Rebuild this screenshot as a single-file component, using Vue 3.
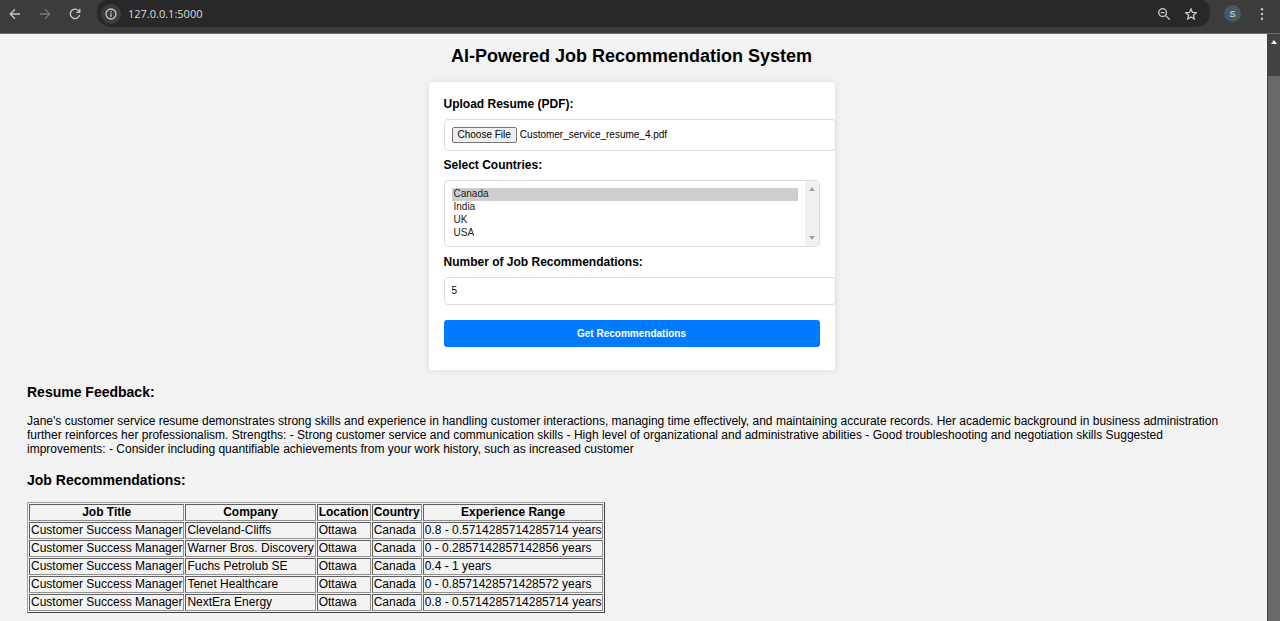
<script setup>
import { onMounted, ref } from 'vue'

const resumeInput = ref(null)
const countries = ['Canada', 'India', 'UK', 'USA']
const selected = ref(['Canada'])
const count = ref(5)

const columns = ['Job Title', 'Company', 'Location', 'Country', 'Experience Range']
const jobs = [
  ['Customer Success Manager', 'Cleveland-Cliffs', 'Ottawa', 'Canada', '0.8 - 0.5714285714285714 years'],
  ['Customer Success Manager', 'Warner Bros. Discovery', 'Ottawa', 'Canada', '0 - 0.2857142857142856 years'],
  ['Customer Success Manager', 'Fuchs Petrolub SE', 'Ottawa', 'Canada', '0.4 - 1 years'],
  ['Customer Success Manager', 'Tenet Healthcare', 'Ottawa', 'Canada', '0 - 0.8571428571428572 years'],
  ['Customer Success Manager', 'NextEra Energy', 'Ottawa', 'Canada', '0.8 - 0.5714285714285714 years'],
]

onMounted(() => {
  const transfer = new DataTransfer()
  transfer.items.add(new File([''], 'Customer_service_resume_4.pdf', { type: 'application/pdf' }))
  resumeInput.value.files = transfer.files
})
</script>

<template>
  <div class="browser">
    <header class="toolbar">
      <nav class="nav">
        <button type="button" aria-label="Back">
          <svg viewBox="0 0 12 12"><path d="M11 6H1.5M6 1.2L1.2 6L6 10.8" /></svg>
        </button>
        <button type="button" class="dim" aria-label="Forward">
          <svg viewBox="0 0 12 12"><path d="M1 6H10.5M6 1.2L10.8 6L6 10.8" /></svg>
        </button>
        <button type="button" aria-label="Reload">
          <svg viewBox="0 0 12 12"><path d="M10.6 7A4.7 4.7 0 1 1 9.6 2.8L10.8 4.2M10.8 0.8V4.3H7.2" /></svg>
        </button>
      </nav>
      <div class="omnibox">
        <button type="button" class="info" aria-label="Site information">
          <svg viewBox="0 0 12 12"><circle cx="6" cy="6" r="5" /><path d="M6 5.4V8.8M6 3.1V4.4" /></svg>
        </button>
        <input class="address" type="text" aria-label="Address" value="127.0.0.1:5000" />
        <button type="button" aria-label="Zoom">
          <svg viewBox="0 0 12 12"><circle cx="4.6" cy="4.6" r="3.9" /><path d="M7.4 7.4L11.7 11.7M2.8 4.6H6.4" /></svg>
        </button>
        <button type="button" aria-label="Bookmark">
          <svg viewBox="0 0 12 12"><path d="M6 0.9L7.5 4.4L11.3 4.7L8.4 7.2L9.3 11L6 9L2.7 11L3.6 7.2L0.7 4.7L4.5 4.4Z" /></svg>
        </button>
      </div>
      <button type="button" class="avatar" aria-label="Profile">S</button>
      <button type="button" class="menu" aria-label="Menu">
        <svg viewBox="0 0 4 12"><circle cx="2" cy="1.3" r="1.2" /><circle cx="2" cy="6" r="1.2" /><circle cx="2" cy="10.7" r="1.2" /></svg>
      </button>
    </header>

    <div class="viewport">
      <main class="page">
        <h1>AI-Powered Job Recommendation System</h1>
        <form class="card" @submit.prevent>
          <label for="resume">Upload Resume (PDF):</label>
          <input id="resume" ref="resumeInput" class="field" type="file" accept=".pdf" />

          <label for="countries">Select Countries:</label>
          <div class="list">
            <select id="countries" v-model="selected" multiple size="4">
              <option v-for="c in countries" :key="c" :value="c">{{ c }}</option>
            </select>
            <div class="list-scroll" aria-hidden="true">
              <i class="arrow up"></i>
              <i class="arrow down"></i>
            </div>
          </div>

          <label for="count">Number of Job Recommendations:</label>
          <input id="count" v-model="count" class="field number" type="number" />

          <button class="submit" type="submit">Get Recommendations</button>
        </form>

        <section class="results">
          <h2>Resume Feedback:</h2>
          <p>Jane's customer service resume demonstrates strong skills and experience in handling customer interactions, managing time effectively, and maintaining accurate records. Her academic background in business administration further reinforces her professionalism. Strengths: - Strong customer service and communication skills - High level of organizational and administrative abilities - Good troubleshooting and negotiation skills Suggested improvements: - Consider including quantifiable achievements from your work history, such as increased customer</p>
          <h2>Job Recommendations:</h2>
          <table>
            <thead>
              <tr><th v-for="c in columns" :key="c" scope="col">{{ c }}</th></tr>
            </thead>
            <tbody>
              <tr v-for="(job, i) in jobs" :key="i">
                <td v-for="(cell, j) in job" :key="j">{{ cell }}</td>
              </tr>
            </tbody>
          </table>
        </section>
      </main>
      <div class="page-scroll" aria-hidden="true">
        <div class="track"><i class="arrow up"></i></div>
        <div class="thumb"></div>
      </div>
    </div>
  </div>
</template>

<style>
body {
  overflow: hidden;
}
</style>

<style scoped>
.browser {
  display: flex;
  flex-direction: column;
  height: 100vh;
  background: #f3f3f3;
  color: #000;
  font: 12px/14px Arial, "Liberation Sans", sans-serif;
}

button {
  padding: 0;
  border: 0;
  background: none;
  color: inherit;
  font-family: inherit;
}

/* Toolbar */
.toolbar {
  display: flex;
  flex: none;
  align-items: flex-start;
  height: 33px;
  border-bottom: 1px solid #6e6e6e;
  background: #3c3c3c;
  color: #c8c8c8;
}

.toolbar button {
  display: flex;
  flex: none;
  align-items: center;
  justify-content: center;
}

.toolbar svg {
  width: 12px;
  height: 12px;
  fill: none;
  stroke: currentColor;
  stroke-width: 1.3;
}

.nav {
  display: flex;
  box-sizing: border-box;
  gap: 18px;
  width: 97px;
  padding-left: 9px;
}

.nav button {
  width: 12px;
  height: 27px;
}

.nav .dim {
  color: #777;
}

.omnibox {
  display: flex;
  flex: 1;
  align-items: center;
  gap: 15px;
  height: 27px;
  padding: 0 13px 0 4px;
  border-radius: 10px 10px 14px 14px;
  background: #282828;
}

.omnibox .info {
  width: 20px;
  height: 20px;
  border-radius: 50%;
  background: #3c3c3c;
}

.address {
  flex: 1;
  min-width: 0;
  margin-left: -8px;
  padding: 0;
  border: 0;
  outline: 0;
  background: none;
  color: #dcdcdc;
  font: 11px/16px "Open Sans", "Noto Sans", sans-serif;
}

.toolbar .avatar {
  width: 17px;
  height: 17px;
  margin: 5px 19px 0 14px;
  border-radius: 50%;
  background: #455a64;
  color: #e4e4e4;
  font-size: 9px;
}

.toolbar .menu {
  width: 4px;
  height: 27px;
  margin-right: 16px;
}

.toolbar .menu svg {
  width: 4px;
  fill: currentColor;
  stroke: none;
}

/* Page */
.viewport {
  display: flex;
  flex: 1;
  min-height: 0;
}

.page {
  flex: 1;
  min-width: 0;
  padding: 12px 19px 0 15px;
  overflow: hidden;
}

h1 {
  margin: 0 0 15px;
  font-size: 18px;
  line-height: 21px;
  text-align: center;
}

.card {
  width: 376px;
  max-width: 100%;
  margin: 0 auto;
  padding: 15px 15px 23px;
  border-radius: 4px;
  background: #fff;
  box-shadow: 0 0 8px rgba(0, 0, 0, 0.1);
}

label {
  display: block;
  font-weight: bold;
}

.field,
.list {
  border: 1px solid #ddd;
  border-radius: 4px;
  background: #fff;
}

.field {
  box-sizing: content-box;
  display: block;
  width: 100%;
  margin: 8px 0 7px;
  padding: 7px;
  outline: 0;
  color: #000;
  font: 10px/12px Arial, "Liberation Sans", sans-serif;
}

.field::file-selector-button {
  margin: 0 3px 0 0;
  padding: 1px 5px;
  border: 1px solid #767676;
  border-radius: 2px;
  background: #efefef;
  color: #000;
  font: inherit;
}

.number {
  margin-bottom: 15px;
  appearance: textfield;
}

.number::-webkit-inner-spin-button {
  appearance: none;
}

.list {
  display: flex;
  margin: 8px 0;
  overflow: hidden;
}

select {
  box-sizing: border-box;
  flex: 1;
  min-width: 0;
  height: 65px;
  padding: 7px;
  border: 0;
  outline: 0;
  background: none;
  font: 10px/12px Arial, "Liberation Sans", sans-serif;
  overflow: hidden;
}

option {
  box-sizing: border-box;
  height: 13px;
  min-height: 0;
  padding: 0 2px;
  color: #222;
}

option:checked {
  background: #cecece linear-gradient(#cecece, #cecece);
  color: #222;
}

.list-scroll {
  display: flex;
  flex-direction: column;
  align-items: center;
  justify-content: space-between;
  box-sizing: border-box;
  width: 14px;
  padding: 6px 0;
  background: #f1f1f1;
  color: #a0a0a0;
}

.arrow {
  border: 3px solid transparent;
}

.arrow.up {
  border-top: 0;
  border-bottom: 4px solid currentColor;
}

.arrow.down {
  border-top: 4px solid currentColor;
  border-bottom: 0;
}

.submit {
  display: block;
  width: 100%;
  padding: 8px;
  border-radius: 3px;
  background: #007bff;
  color: #fff;
  font-size: 10px;
  font-weight: bold;
  line-height: 11px;
}

.results {
  padding: 0 12px;
}

h2 {
  margin: 14px 0;
  font-size: 14px;
  line-height: 16px;
}

p {
  margin: 14px 0 16px;
}

table {
  border: 1px solid;
  border-color: #a0a0a0 #404040 #404040 #a0a0a0;
  border-spacing: 1px;
  font-size: 12px;
  line-height: 13px;
}

th,
td {
  padding: 1px;
  border: 1px solid;
  border-color: #606060 #909090 #909090 #606060;
  white-space: nowrap;
}

.page-scroll {
  display: flex;
  flex-direction: column;
  width: 13px;
  background: #424242;
  color: #fff;
}

.track {
  display: flex;
  align-items: flex-start;
  justify-content: center;
  box-sizing: border-box;
  height: 42px;
  padding-top: 6px;
}

.thumb {
  flex: 1;
  margin-left: 1px;
  background: #686868;
}
</style>
